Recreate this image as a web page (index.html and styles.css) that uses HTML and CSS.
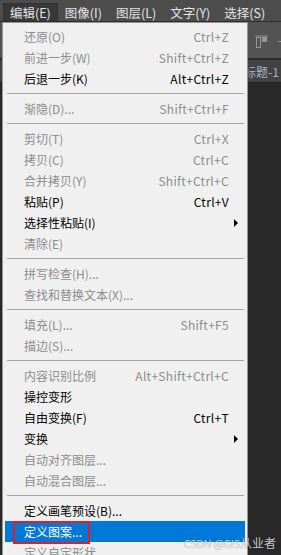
FILE: index.html
```html
<!DOCTYPE html>
<html>
<head>
   <meta charset="utf-8">
   <title>编辑菜单</title>
   <link rel="stylesheet" href="styles.css">
</head>
<body>
<div class="app">
   <div class="menubar">
      <span class="menubarItem active">编辑(E)</span>
      <span class="menubarItem">图像(I)</span>
      <span class="menubarItem">图层(L)</span>
      <span class="menubarItem">文字(Y)</span>
      <span class="menubarItem">选择(S)</span>
   </div>
   <div class="optionsbar">
      <svg class="toolIcon" width="13" height="13" viewBox="0 0 13 13">
         <rect x="0" y="0.5" width="13" height="1" fill="rgb(150,150,150)"/>
         <rect x="1.5" y="2.5" width="4" height="10" fill="none" stroke="rgb(150,150,150)"/>
         <rect x="7" y="2" width="5" height="5" fill="rgb(150,150,150)"/>
      </svg>
      <svg class="toolIcon" width="4" height="13" viewBox="0 0 4 13">
         <rect x="3" y="1" width="1" height="12" fill="rgb(150,150,150)"/>
         <rect x="0" y="6" width="4" height="1" fill="rgb(150,150,150)"/>
      </svg>
   </div>
   <div class="tabbar">
      <span class="docTab">未标题-1</span>
   </div>
   <div class="workspace"></div>
</div>

<div class="menu">
   <div class="item disabled"><span class="label">还原(O)</span><span class="key">Ctrl+Z</span></div>
   <div class="item disabled"><span class="label">前进一步(W)</span><span class="key">Shift+Ctrl+Z</span></div>
   <div class="item"><span class="label">后退一步(K)</span><span class="key">Alt+Ctrl+Z</span></div>
   <div class="sep"></div>
   <div class="item disabled"><span class="label">渐隐(D)...</span><span class="key">Shift+Ctrl+F</span></div>
   <div class="sep"></div>
   <div class="item disabled"><span class="label">剪切(T)</span><span class="key">Ctrl+X</span></div>
   <div class="item disabled"><span class="label">拷贝(C)</span><span class="key">Ctrl+C</span></div>
   <div class="item disabled"><span class="label">合并拷贝(Y)</span><span class="key">Shift+Ctrl+C</span></div>
   <div class="item"><span class="label">粘贴(P)</span><span class="key">Ctrl+V</span></div>
   <div class="item"><span class="label">选择性粘贴(I)</span><span class="key"></span><span class="arrow"></span></div>
   <div class="item disabled"><span class="label">清除(E)</span></div>
   <div class="sep"></div>
   <div class="item disabled"><span class="label">拼写检查(H)...</span></div>
   <div class="item disabled"><span class="label">查找和替换文本(X)...</span></div>
   <div class="sep"></div>
   <div class="item disabled"><span class="label">填充(L)...</span><span class="key">Shift+F5</span></div>
   <div class="item disabled"><span class="label">描边(S)...</span></div>
   <div class="sep"></div>
   <div class="item disabled"><span class="label">内容识别比例</span><span class="key">Alt+Shift+Ctrl+C</span></div>
   <div class="item"><span class="label">操控变形</span></div>
   <div class="item"><span class="label">自由变换(F)</span><span class="key">Ctrl+T</span></div>
   <div class="item"><span class="label">变换</span><span class="key"></span><span class="arrow"></span></div>
   <div class="item disabled"><span class="label">自动对齐图层...</span></div>
   <div class="item disabled"><span class="label">自动混合图层...</span></div>
   <div class="sep"></div>
   <div class="item"><span class="label">定义画笔预设(B)...</span></div>
   <div class="item selected"><span class="label">定义图案...</span><span class="redBox"></span></div>
   <div class="item disabled"><span class="label">定义自定形状</span></div>
</div>

<div class="watermark"><span class="wmLatin">CSDN @GIS</span>从业者</div>
</body>
</html>
```

FILE: styles.css
```css
body {
   margin: 0;
   padding: 0;
   background-color: rgb(40,40,40);
   font-family: "Microsoft YaHei", "Noto Sans CJK SC", sans-serif;
   width: 281px;
   height: 555px;
   overflow: hidden;
   position: relative;
}

/* Photoshop window behind the menu */
.app {
   display: flex;
   flex-direction: column;
   height: 555px;
}
.menubar {
   display: flex;
   align-items: flex-end;
   height: 21px;
   padding-left: 3px;
   background-color: rgb(77,77,77);
   border-bottom: 1px solid rgb(44,44,44);
   overflow: hidden;
}
.menubarItem {
   height: 17px;
   line-height: 17px;
   padding: 0 6px;
   border: 1px solid transparent;
   border-bottom: 0;
   color: rgb(228,228,228);
   font-size: 12.5px;
   white-space: nowrap;
}
.menubarItem.active {
   background-color: rgb(56,56,56);
   border-color: rgb(48,48,48);
}
.optionsbar {
   display: flex;
   align-items: center;
   gap: 10px;
   height: 36px;
   padding-left: 255px;
   background-color: rgb(83,83,83);
   border-bottom: 2px solid rgb(44,44,44);
}
.toolIcon {
   flex: none;
   margin-top: 2px;
}
.tabbar {
   display: flex;
   align-items: center;
   height: 22px;
   padding-left: 232px;
   background-color: rgb(66,66,66);
   border-bottom: 1px solid rgb(36,36,36);
}
.docTab {
   color: rgb(168,180,198);
   font-size: 12px;
   white-space: nowrap;
}
.workspace {
   flex: 1;
   background-color: rgb(40,40,40);
}

/* Dropdown menu */
.menu {
   position: absolute;
   left: 2px;
   top: 22px;
   width: 244px;
   padding: 3px 0;
   background-color: rgb(240,240,240);
   border: 1px solid rgb(151,151,151);
   font-size: 12px;
}
.item {
   position: relative;
   display: grid;
   grid-template-columns: 1fr auto 16px;
   align-items: center;
   height: 21px;
   margin: 0 2px;
   padding-left: 19px;
   color: rgb(0,0,0);
   white-space: nowrap;
}
.item.disabled {
   color: rgb(141,141,141);
}
.item.selected {
   background-color: rgb(0,120,215);
   color: rgb(255,255,255);
}
.key {
   text-align: right;
   letter-spacing: 0.3px;
}
.arrow {
   width: 0;
   height: 0;
   margin-left: 5px;
   border-top: 4px solid transparent;
   border-bottom: 4px solid transparent;
   border-left: 4px solid rgb(0,0,0);
}
.sep {
   height: 9px;
   display: flex;
   align-items: center;
   padding: 0 3px 0 4px;
}
.sep::before {
   content: "";
   flex: 1;
   height: 1px;
   background-color: rgb(166,166,166);
}

/* annotation drawn over the selected item */
.redBox {
   position: absolute;
   left: 8px;
   top: 0;
   width: 77px;
   height: 23px;
   border: 2px solid rgb(226,30,36);
   box-sizing: border-box;
}

.watermark {
   position: absolute;
   right: 5px;
   top: 535px;
   color: rgba(235,235,235,0.85);
   font-family: "Noto Sans CJK SC", sans-serif;
   font-size: 12px;
   line-height: 16px;
   text-shadow: 0 0 1px rgba(0,0,0,0.35);
   white-space: nowrap;
}
.wmLatin {
   font-size: 11px;
   letter-spacing: -0.3px;
}
```
